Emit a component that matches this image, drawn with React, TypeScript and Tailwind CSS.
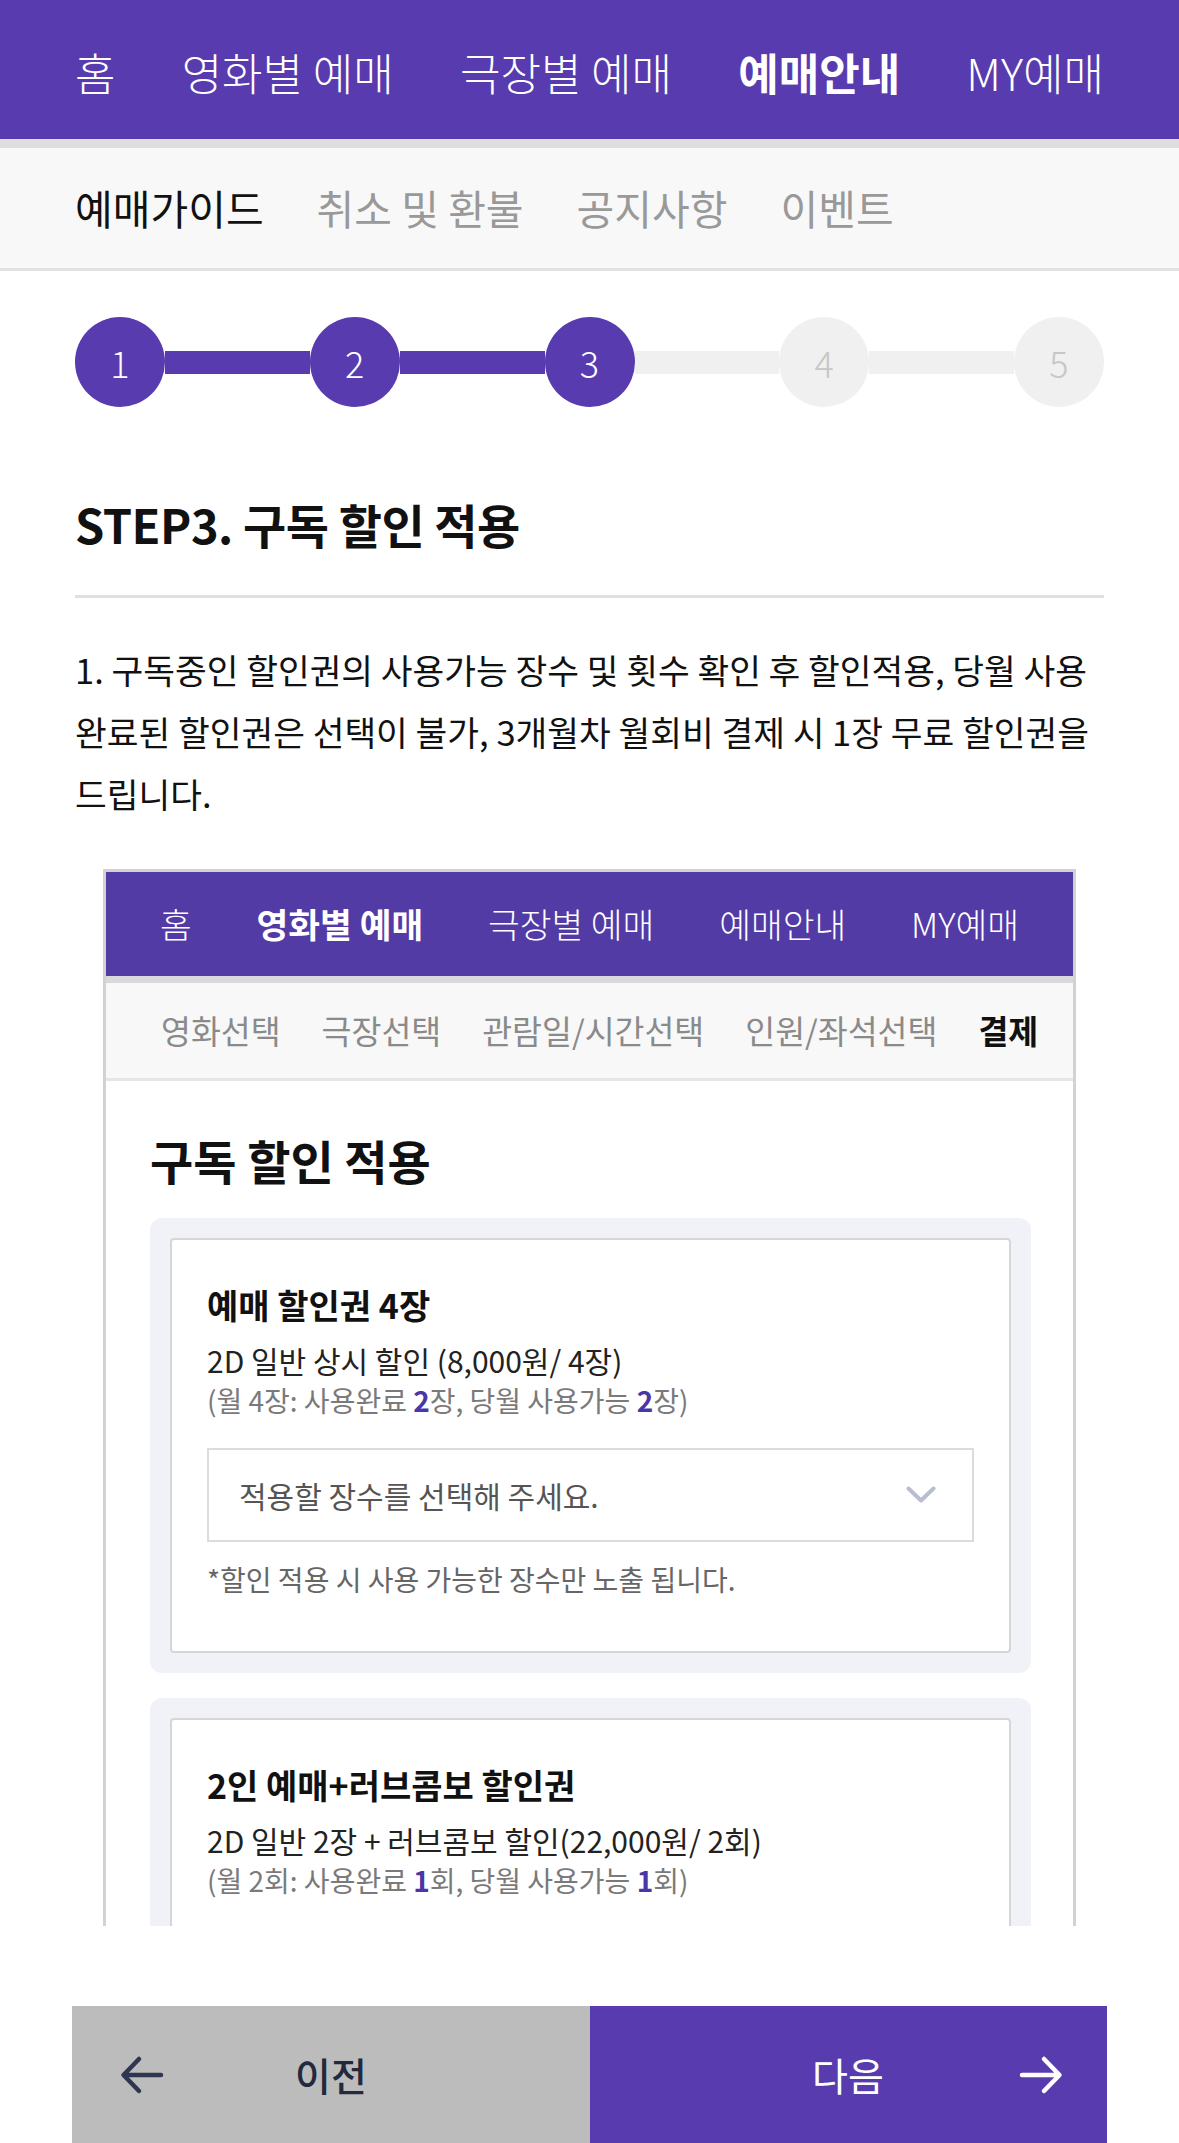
import React from 'react';

const font = { fontFamily: '"Noto Sans CJK KR", "Noto Sans", sans-serif' };

const steps = [1, 2, 3, 4, 5];
const current = 3;

const Chevron = () => (
  <svg width="30" height="18" viewBox="0 0 30 18" fill="none">
    <path d="M2.5 2.5L15 14.5L27.5 2.5" stroke="#b9bdd0" strokeWidth="4" strokeLinecap="round" strokeLinejoin="round" />
  </svg>
);

const Arrow = ({ dir, color }: { dir: 'left' | 'right'; color: string }) => (
  <svg width="44" height="40" viewBox="0 0 44 40" fill="none" className={dir === 'right' ? 'rotate-180' : ''}>
    <path d="M41 20H4M19 4L3.5 20L19 36" stroke={color} strokeWidth="4.5" strokeLinecap="round" strokeLinejoin="round" />
  </svg>
);

const Stepper: React.FC = () => (
  <div className="flex items-center mt-[46px]">
    {steps.map((n, i) => (
      <React.Fragment key={n}>
        {i > 0 && (
          <div className={`flex-1 h-[23px] ${n <= current ? 'bg-[#593bb0]' : 'bg-[#f0f0f0]'}`} />
        )}
        <div
          className={`w-[90px] h-[90px] rounded-full flex items-center justify-center text-[36px] font-light ${
            n <= current ? 'bg-[#593bb0] text-white' : 'bg-[#f0f0f0] text-[#c6c6c6]'
          }`}
        >
          {n}
        </div>
      </React.Fragment>
    ))}
  </div>
);

const Ticket: React.FC<{
  title: string;
  desc: string;
  unit: string;
  total: string;
  used: string;
  left: string;
  children?: React.ReactNode;
}> = ({ title, desc, unit, total, used, left, children }) => (
  <div className="bg-[#f0f2f7] rounded-[12px] p-[20px] ml-[44px] w-[881px]">
    <div className="bg-white border-2 border-[#d6d6d6] rounded-[4px] px-[35px] pt-[45px] pb-[55px]">
      <div className="text-[34px] leading-[40px] font-bold text-[#111]">{title}</div>
      <div className="mt-[17px] text-[30px] leading-[36px] text-[#222]">{desc}</div>
      <div className="mt-[5px] text-[28px] leading-[34px] text-[#7a7a7a] whitespace-nowrap">
        (월 {total}{unit}: 사용완료 <b className="text-[#4b36a6]">{used}</b>{unit}, 당월 사용가능{' '}
        <b className="text-[#4b36a6]">{left}</b>{unit})
      </div>
      {children}
    </div>
  </div>
);

export default function App() {
  return (
    <div className="w-[1179px] min-h-[2143px] bg-white text-[#111]" style={font}>
      {/* top nav */}
      <div className="h-[148px] bg-[#593bb0] border-b-[9px] border-[#dedede] px-[75px] flex items-center justify-between text-[44px] text-white font-light pt-[4px]">
        <span>홈</span>
        <span>영화별 예매</span>
        <span>극장별 예매</span>
        <span className="font-bold">예매안내</span>
        <span>MY예매</span>
      </div>
      {/* sub nav */}
      <div className="h-[123px] bg-[#f8f8f8] border-b-[3px] border-[#e2e2e2] px-[75px] flex items-center gap-[53px] text-[41px] text-[#999]">
        <span className="text-[#111]">예매가이드</span>
        <span>취소 및 환불</span>
        <span>공지사항</span>
        <span>이벤트</span>
      </div>

      <div className="px-[75px]">
        <Stepper />

        <h2 className="mt-[89px] text-[47px] leading-[56px] font-bold tracking-[-0.5px]">STEP3. 구독 할인 적용</h2>
        <div className="mt-[43px] h-[3px] bg-[#e0e0e0]" />
        <p className="mt-[40px] text-[34.5px] leading-[62px] text-[#111] whitespace-nowrap">
          1. 구독중인 할인권의 사용가능 장수 및 횟수 확인 후 할인적용, 당월 사용
          <br />
          완료된 할인권은 선택이 불가, 3개월차 월회비 결제 시 1장 무료 할인권을
          <br />
          드립니다.
        </p>

        {/* screenshot */}
        <div className="mt-[45px] ml-[28px] w-[973px] h-[1057px] overflow-hidden border-x-[3px] border-t-[3px] border-[#d2d2d2]">
          <div className="h-[104px] bg-[#533ba6] px-[54px] flex items-center justify-between text-[34.5px] text-white font-light">
            <span>홈</span>
            <span className="font-bold">영화별 예매</span>
            <span>극장별 예매</span>
            <span>예매안내</span>
            <span>MY예매</span>
          </div>
          <div className="h-[7px] bg-[#d9d9dd]" />
          <div className="h-[98px] bg-[#f8f8f8] border-b-[3px] border-[#e6e6e6] pl-[55px] flex items-center gap-[41px] text-[32.5px] text-[#8a8a8a] whitespace-nowrap">
            <span>영화선택</span>
            <span>극장선택</span>
            <span>관람일/시간선택</span>
            <span>인원/좌석선택</span>
            <span className="font-bold text-[#111]">결제</span>
          </div>

          <div className="mt-[54px] ml-[44px] text-[47px] leading-[50px] font-bold">구독 할인 적용</div>

          <div className="mt-[33px] flex flex-col gap-[25px]">
            <Ticket title="예매 할인권 4장" desc="2D 일반 상시 할인 (8,000원/ 4장)" unit="장" total="4" used="2" left="2">
              <div className="mt-[31px] h-[94px] border-2 border-[#dcdcdc] flex items-center justify-between pl-[30px] pr-[36px]">
                <span className="text-[30px] text-[#555]">적용할 장수를 선택해 주세요.</span>
                <Chevron />
              </div>
              <div className="mt-[20px] text-[28px] leading-[34px] text-[#666]">*할인 적용 시 사용 가능한 장수만 노출 됩니다.</div>
            </Ticket>
            <Ticket title="2인 예매+러브콤보 할인권" desc="2D 일반 2장 + 러브콤보 할인(22,000원/ 2회)" unit="회" total="2" used="1" left="1">
              <div className="h-[200px]" />
            </Ticket>
          </div>
        </div>
      </div>

      {/* bottom buttons */}
      <div className="mt-[80px] ml-[72px] w-[1035px] h-[137px] flex">
        <button className="w-[518px] h-full bg-[#bcbcbc] flex items-center pl-[48px] text-[39px] font-medium text-[#232a3c]">
          <Arrow dir="left" color="#2e3652" />
          <span className="ml-[131px]">이전</span>
        </button>
        <button className="flex-1 h-full bg-[#593bb0] flex items-center pl-[222px] text-[39px] text-white">
          <span>다음</span>
          <span className="ml-[135px]">
            <Arrow dir="right" color="#ffffff" />
          </span>
        </button>
      </div>
    </div>
  );
}
